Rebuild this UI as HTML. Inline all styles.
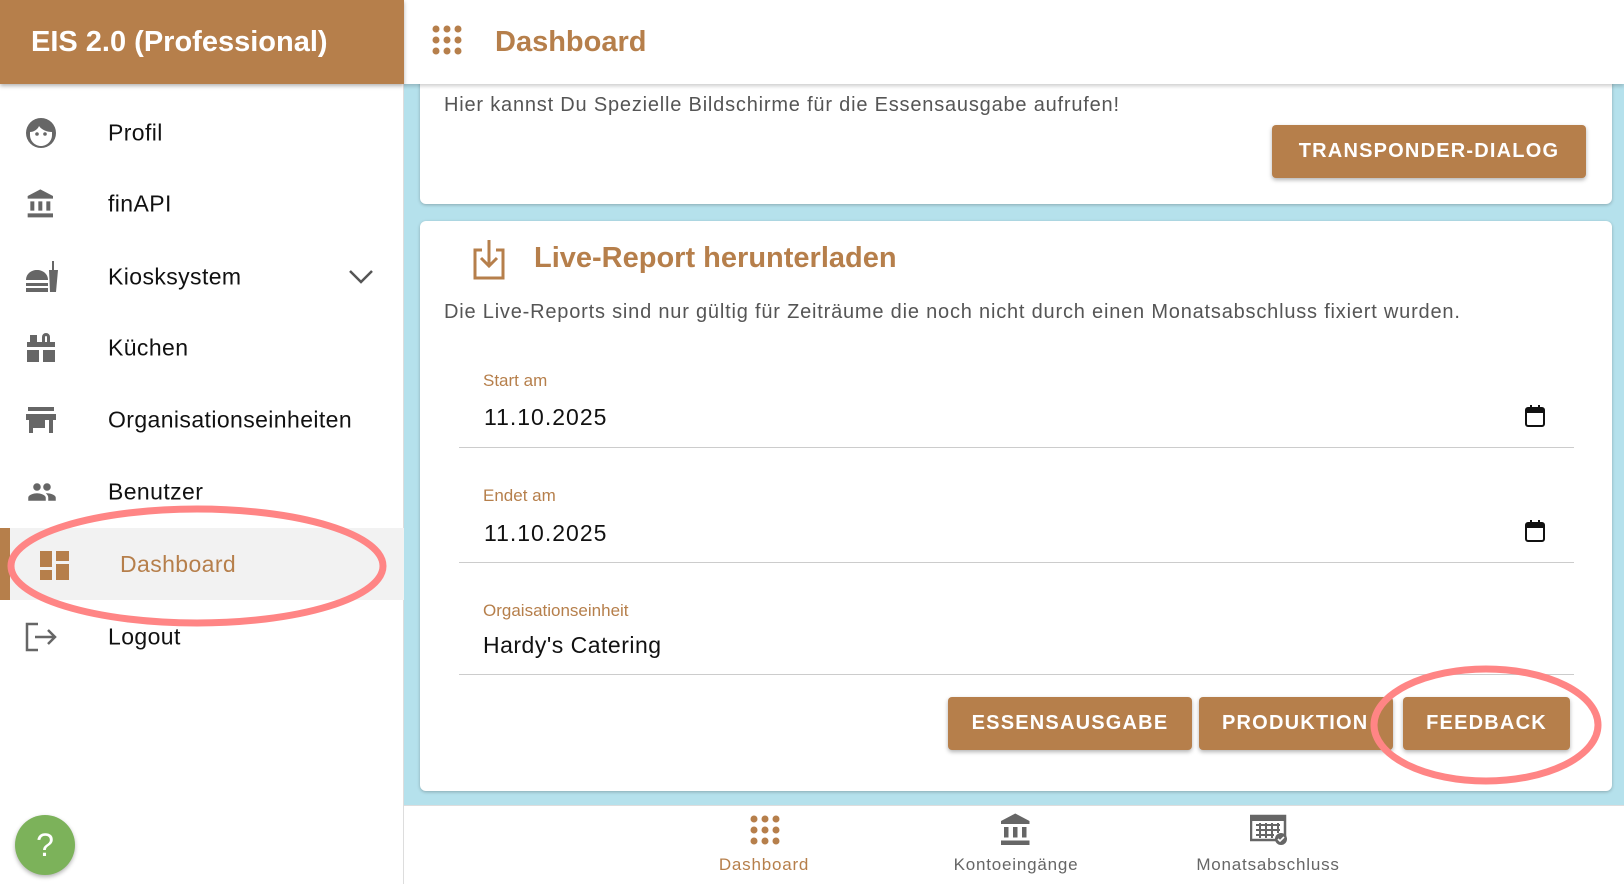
<!DOCTYPE html>
<html><head><meta charset="utf-8"><style>
*{margin:0;padding:0;box-sizing:border-box}
body{width:1624px;height:884px;overflow:hidden;font-family:"Liberation Sans",Arial,sans-serif;background:#fff;position:relative}
.abs{position:absolute}
#side{left:0;top:0;width:404px;height:884px;background:#fff;border-right:1px solid #ddd}
#brand{left:0;top:0;width:404px;height:84px;background:#b67f4b;color:#fff;font-size:29px;font-weight:bold;padding:26px 0 0 31px;box-shadow:0 2px 4px rgba(0,0,0,.3)}
.item{left:0;width:404px;height:72px;font-size:23px;color:#111;letter-spacing:.4px}
.item span{position:absolute;left:108px;top:50%;transform:translateY(-50%)}
.item svg{position:absolute;left:25px;top:50%;transform:translateY(-50%)}
#main{left:404px;top:0;width:1220px;height:805px;background:#b5e1ec}
#hdr{left:404px;top:0;width:1220px;height:84px;background:#fff;box-shadow:0 2px 4px rgba(0,0,0,.2)}
.card{background:#fff;border-radius:6px;box-shadow:0 1px 3px rgba(0,0,0,.25)}
.btn{background:#b67f4b;color:#fff;font-size:20px;font-weight:bold;letter-spacing:1.2px;border-radius:4px;box-shadow:0 2px 4px rgba(0,0,0,.3);display:flex;align-items:center;justify-content:center;overflow:hidden;white-space:nowrap}
.lbl{color:#b67f4b;font-size:17px}
.val{font-size:23px;color:#111}
.line{height:1px;background:#ccc}
.nav{font-size:17px;color:#666;text-align:center;width:200px;letter-spacing:.8px}
.desc{font-size:20px;color:#555;letter-spacing:.8px}
</style></head><body>
<div id="main" class="abs"></div>
<div class="abs card" style="left:420px;top:60px;width:1192px;height:144px"></div>
<div id="hdr" class="abs"></div>
<svg class="abs" style="left:432px;top:25px" width="30" height="30" viewBox="0 0 30 30" fill="#b67f4b"><circle cx="4" cy="4" r="3.5"/><circle cx="15" cy="4" r="3.5"/><circle cx="26" cy="4" r="3.5"/><circle cx="4" cy="15" r="3.5"/><circle cx="15" cy="15" r="3.5"/><circle cx="26" cy="15" r="3.5"/><circle cx="4" cy="26" r="3.5"/><circle cx="15" cy="26" r="3.5"/><circle cx="26" cy="26" r="3.5"/></svg>
<div class="abs" style="left:495px;top:26px;font-size:29px;font-weight:bold;color:#b67f4b">Dashboard</div>
<div class="abs desc" style="left:444px;top:94px">Hier kannst Du Spezielle Bildschirme für die Essensausgabe aufrufen!</div>
<div class="abs btn" style="left:1272px;top:125px;width:314px;height:53px">TRANSPONDER-DIALOG</div>

<div class="abs card" style="left:420px;top:221px;width:1192px;height:570px"></div>
<svg class="abs" style="left:471px;top:238px" width="36" height="42" viewBox="0 0 36 42" fill="none" stroke="#b67f4b" stroke-width="3"><path d="M11 12H4v28h28V12h-7"/><path d="M18 2v26M10 20l8 8 8-8"/></svg>
<div class="abs" style="left:534px;top:242px;font-size:29px;font-weight:bold;color:#b67f4b">Live-Report herunterladen</div>
<div class="abs desc" style="left:444px;top:301px">Die Live-Reports sind nur gültig für Zeiträume die noch nicht durch einen Monatsabschluss fixiert wurden.</div>

<div class="abs lbl" style="left:483px;top:371px">Start am</div>
<div class="abs val" style="left:484px;top:404px;letter-spacing:1px">11.10.2025</div>
<svg class="abs" style="left:1525px;top:405px" width="20" height="22" viewBox="0 0 20 22"><rect x="1" y="3" width="18" height="18" rx="2" fill="none" stroke="#111" stroke-width="2"/><rect x="1" y="3" width="18" height="5" fill="#111"/><rect x="5" y="0" width="2" height="4" fill="#111"/><rect x="13" y="0" width="2" height="4" fill="#111"/></svg>
<div class="abs line" style="left:459px;top:447px;width:1115px"></div>
<div class="abs lbl" style="left:483px;top:486px">Endet am</div>
<div class="abs val" style="left:484px;top:520px;letter-spacing:1px">11.10.2025</div>
<svg class="abs" style="left:1525px;top:520px" width="20" height="22" viewBox="0 0 20 22"><rect x="1" y="3" width="18" height="18" rx="2" fill="none" stroke="#111" stroke-width="2"/><rect x="1" y="3" width="18" height="5" fill="#111"/><rect x="5" y="0" width="2" height="4" fill="#111"/><rect x="13" y="0" width="2" height="4" fill="#111"/></svg>
<div class="abs line" style="left:459px;top:562px;width:1115px"></div>
<div class="abs lbl" style="left:483px;top:601px">Orgaisationseinheit</div>
<div class="abs val" style="left:483px;top:632px;letter-spacing:.5px">Hardy's Catering</div>
<div class="abs line" style="left:459px;top:674px;width:1115px"></div>
<div class="abs btn" style="left:948px;top:697px;width:244px;height:53px">ESSENSAUSGABE</div>
<div class="abs btn" style="left:1199px;top:697px;width:194px;height:53px;justify-content:flex-start;padding-left:23px">PRODUKTION</div>
<div class="abs btn" style="left:1403px;top:697px;width:167px;height:53px">FEEDBACK</div>

<svg class="abs" style="left:0;top:0" width="1624" height="884"><ellipse cx="1486" cy="725" rx="112" ry="56" fill="none" stroke="#ff8585" stroke-width="7"/></svg>

<div class="abs" style="left:404px;top:805px;width:1220px;height:79px;background:#fff;border-top:1px solid #ddd"></div>
<svg class="abs" style="left:750px;top:815px" width="30" height="30" viewBox="0 0 30 30" fill="#b67f4b"><circle cx="4" cy="4" r="3.5"/><circle cx="15" cy="4" r="3.5"/><circle cx="26" cy="4" r="3.5"/><circle cx="4" cy="15" r="3.5"/><circle cx="15" cy="15" r="3.5"/><circle cx="26" cy="15" r="3.5"/><circle cx="4" cy="26" r="3.5"/><circle cx="15" cy="26" r="3.5"/><circle cx="26" cy="26" r="3.5"/></svg>
<div class="abs nav" style="left:664px;top:855px;color:#b67f4b">Dashboard</div>
<svg class="abs" style="left:998px;top:812px" width="36" height="36" viewBox="0 0 24 24" fill="#666"><path d="M4 10v7h3v-7H4zm6 0v7h3v-7h-3zM2 22h19v-3H2v3zm14-12v7h3v-7h-3zm-4.5-9L2 6v2h19V6l-9.5-5z"/></svg>
<div class="abs nav" style="left:916px;top:855px">Kontoeingänge</div>
<svg class="abs" style="left:1250px;top:812px" width="38" height="34" viewBox="0 0 38 34"><rect x="1" y="4" width="34" height="24" fill="none" stroke="#666" stroke-width="2.5"/><rect x="1" y="4" width="34" height="5" fill="#666"/><path d="M6 13h24M6 18h24M6 23h18M10 11v15M16 11v15M22 11v15M28 11v10" stroke="#666" stroke-width="2"/><circle cx="31" cy="27" r="6" fill="#666"/><path d="M28 27l2 2 4-4" stroke="#fff" stroke-width="1.6" fill="none"/></svg>
<div class="abs nav" style="left:1168px;top:855px">Monatsabschluss</div>

<div id="side" class="abs"></div>
<div id="brand" class="abs">EIS 2.0 (Professional)</div>
<div class="abs item" style="top:97px"><svg width="32" height="32" viewBox="0 0 32 32"><circle cx="16" cy="16" r="15" fill="#666"/><path d="M5 15c4 0 8-3 9-6 2 3 7 6 13 6v3c0 6-5 11-11 11S5 24 5 18z" fill="#fff"/><circle cx="12" cy="17" r="1.8" fill="#666"/><circle cx="20" cy="17" r="1.8" fill="#666"/></svg><span>Profil</span></div>
<div class="abs item" style="top:168px"><svg width="32" height="32" viewBox="0 0 24 24" fill="#666"><path d="M4 10v7h3v-7H4zm6 0v7h3v-7h-3zM2 22h19v-3H2v3zm14-12v7h3v-7h-3zm-4.5-9L2 6v2h19V6l-9.5-5z"/></svg><span>finAPI</span></div>
<div class="abs item" style="top:241px"><svg width="34" height="34" viewBox="0 0 34 34" fill="#666"><path d="M1 20c0-6 5-10 11-10s11 4 11 10z"/><rect x="1" y="23" width="22" height="3"/><rect x="1" y="28" width="22" height="4"/><path d="M24 10h9l-2 22h-6z"/><rect x="27" y="1" width="2" height="9"/></svg><span>Kiosksystem</span><svg style="left:348px" width="26" height="16" viewBox="0 0 26 16"><path d="M2 2l11 11L24 2" stroke="#555" stroke-width="2.5" fill="none"/></svg></div>
<div class="abs item" style="top:312px"><svg width="32" height="32" viewBox="0 0 32 32" fill="#666"><rect x="2" y="10" width="28" height="20"/><rect x="5" y="3" width="7" height="7"/><path d="M17 10V5a4 4 0 018 0v5h-3V5a1 1 0 00-2 0v5z"/><rect x="14" y="18" width="4" height="12" fill="#fff"/><rect x="2" y="15" width="28" height="3" fill="#fff"/></svg><span>Küchen</span></div>
<div class="abs item" style="top:384px"><svg width="32" height="30" viewBox="0 0 32 30" fill="#666"><rect x="3" y="2" width="26" height="4"/><path d="M1 9h30v6H1z"/><rect x="4" y="15" width="4" height="13"/><rect x="24" y="15" width="4" height="13"/><rect x="8" y="15" width="12" height="8"/></svg><span>Organisationseinheiten</span></div>
<div class="abs item" style="top:456px"><svg width="34" height="30" viewBox="0 0 24 24" fill="#666"><path d="M16 11c1.66 0 2.990-1.34 2.99-3S17.66 5 16 5c-1.66 0-3 1.34-3 3s1.34 3 3 3zm-8 0c1.66 0 2.99-1.34 2.99-3S9.66 5 8 5C6.34 5 5 6.34 5 8s1.34 3 3 3zm0 2c-2.33 0-7 1.17-7 3.5V19h14v-2.5c0-2.33-4.670-3.5-7-3.5zm8 0c-.29 0-.62.02-.97.05 1.16.84 1.97 1.97 1.97 3.45V19h6v-2.5c0-2.33-4.67-3.5-7-3.5z"/></svg><span>Benutzer</span></div>
<div class="abs" style="left:0;top:528px;width:404px;height:72px;background:#f2f2f2"></div>
<div class="abs" style="left:0;top:528px;width:10px;height:72px;background:#b67f4b"></div>
<svg class="abs" style="left:40px;top:551px" width="29" height="29" viewBox="0 0 29 29" fill="#b67f4b"><rect x="0" y="0" width="12" height="16"/><rect x="0" y="19" width="12" height="10"/><rect x="16" y="0" width="13" height="10"/><rect x="16" y="13" width="13" height="16"/></svg>
<div class="abs" style="left:120px;top:551px;font-size:23px;color:#b67f4b;letter-spacing:.4px">Dashboard</div>
<div class="abs item" style="top:601px"><svg width="32" height="30" viewBox="0 0 32 30" fill="none" stroke="#666" stroke-width="2.5"><path d="M13 2H2v26h11"/><path d="M10 15h20M23 8l7 7-7 7"/></svg><span>Logout</span></div>
<svg class="abs" style="left:0;top:0" width="404" height="884"><ellipse cx="197" cy="566" rx="186" ry="57" fill="none" stroke="#ff8585" stroke-width="7"/></svg>
<div class="abs" style="left:15px;top:815px;width:60px;height:60px;border-radius:50%;background:#7cb25a;color:#fff;font-size:32px;display:flex;align-items:center;justify-content:center;box-shadow:0 2px 4px rgba(0,0,0,.3)">?</div>
</body></html>
